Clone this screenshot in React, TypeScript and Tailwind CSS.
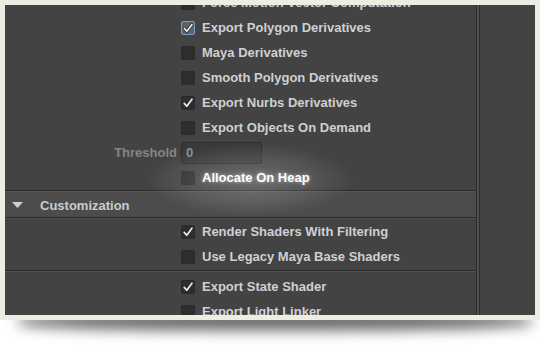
import React from "react";

type Kind = "off" | "on" | "focus";

function Check({ kind }: { kind: Kind }) {
  if (kind === "focus") {
    return (
      <div className="w-[14px] h-[14px] rounded-[2px] border border-[#7f9cc2] bg-[#5a636e] flex items-center justify-center">
        <svg width="12" height="12" viewBox="0 0 12 12">
          <path d="M2.2 6.2 L4.8 9.2 L10 2.4" fill="none" stroke="#1e1e1e" strokeWidth="3" strokeLinecap="round" strokeLinejoin="round" />
          <path d="M2.2 6.2 L4.8 9.2 L10 2.4" fill="none" stroke="#f4f4f4" strokeWidth="1.6" strokeLinecap="round" strokeLinejoin="round" />
        </svg>
      </div>
    );
  }
  return (
    <div className="w-[14px] h-[14px] rounded-[2px] border border-[#2a2a2a] bg-[#2e2e2e] flex items-center justify-center">
      {kind === "on" && (
        <svg width="14" height="14" viewBox="0 0 14 14">
          <path d="M2.6 7.4 L5.6 10.8 L11.6 2.6" fill="none" stroke="#f2f2f2" strokeWidth="1.9" strokeLinecap="round" strokeLinejoin="round" />
        </svg>
      )}
    </div>
  );
}

function Row({ label, kind, glow }: { label: string; kind: Kind; glow?: boolean }) {
  return (
    <div className="h-[25px] shrink-0 flex items-center pl-[176px] gap-[7px]">
      <Check kind={kind} />
      <span
        className={
          glow
            ? "text-[13px] font-bold text-white [text-shadow:0_0_4px_rgba(255,255,255,0.6)] whitespace-nowrap"
            : "text-[13px] font-bold text-[#cfd0d2] whitespace-nowrap"
        }
      >
        {label}
      </span>
    </div>
  );
}

export default function App() {
  return (
    <div className="w-[540px] h-[345px] bg-white relative overflow-hidden font-['Liberation_Sans',Arial,sans-serif]">
      <div className="absolute left-[18px] right-[8px] top-[312px] h-[18px] bg-[#5e5e5e] blur-[7px] rounded-[40%]" />
      <div className="relative w-[540px] h-[320px] bg-[#edede3] p-[5px]">
        <div className="relative flex h-[310px] bg-[#434343] overflow-hidden">
          <div className="w-[471px] shrink-0 flex flex-col -mt-[15px]">
            <Row label="Force Motion Vector Computation" kind="off" />
            <Row label="Export Polygon Derivatives" kind="focus" />
            <Row label="Maya Derivatives" kind="off" />
            <Row label="Smooth Polygon Derivatives" kind="off" />
            <Row label="Export Nurbs Derivatives" kind="on" />
            <Row label="Export Objects On Demand" kind="off" />
            <div className="h-[25px] shrink-0 flex items-center">
              <span className="w-[172px] text-right text-[13px] font-bold text-[#858585]">Threshold</span>
              <div className="ml-[4px] w-[81px] h-[22px] rounded-[2px] border border-[#2d2d2d] bg-[#3a3a3a] flex items-center pl-[4px]">
                <span className="text-[13px] font-bold text-[#8e8e8e]">0</span>
              </div>
            </div>
            <Row label="Allocate On Heap" kind="off" glow />
            <div className="shrink-0 border-t border-b border-[#2a2a2a] bg-[#4c4c4c]">
              <div className="h-[1px] bg-[#575757]" />
              <div className="h-[25px] flex items-center pl-[7px] pt-[2px]">
                <svg width="11" height="7" viewBox="0 0 11 7">
                  <path d="M0 0 L11 0 L5.5 6 Z" fill="#cfcfcf" />
                </svg>
                <span className="ml-[17px] text-[13px] font-bold text-[#c4ccd3]">Customization</span>
              </div>
            </div>
            <div className="h-[1px] shrink-0 bg-[#4e4e4e]" />
            <Row label="Render Shaders With Filtering" kind="on" />
            <Row label="Use Legacy Maya Base Shaders" kind="off" />
            <div className="shrink-0 mt-[1px] mb-[2px]">
              <div className="h-[1px] bg-[#2a2a2a]" />
              <div className="h-[1px] bg-[#505050]" />
            </div>
            <Row label="Export State Shader" kind="on" />
            <Row label="Export Light Linker" kind="off" />
          </div>
          <div className="w-[1px] bg-[#2b2b2b]" />
          <div className="w-[2px] bg-[#4f4f4f]" />
          <div className="w-[1px] bg-[#2d2d2d]" />
          <div className="flex-1" />
          <div className="absolute left-[140px] top-[138px] w-[210px] h-[74px] pointer-events-none bg-[radial-gradient(ellipse_at_center,rgba(255,255,255,0.22),rgba(255,255,255,0.09)_45%,transparent_70%)]" />
        </div>
      </div>
    </div>
  );
}
